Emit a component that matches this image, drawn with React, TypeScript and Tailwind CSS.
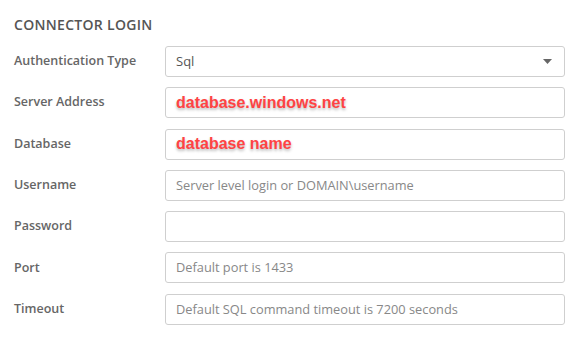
type Row = {
  label: string;
  kind: "select" | "red" | "placeholder" | "empty";
  text?: string;
};

const rows: Row[] = [
  { label: "Authentication Type", kind: "select", text: "Sql" },
  { label: "Server Address", kind: "red", text: "database.windows.net" },
  { label: "Database", kind: "red", text: "database name" },
  { label: "Username", kind: "placeholder", text: "Server level login or DOMAIN\\username" },
  { label: "Password", kind: "empty" },
  { label: "Port", kind: "placeholder", text: "Default port is 1433" },
  { label: "Timeout", kind: "placeholder", text: "Default SQL command timeout is 7200 seconds" },
];

function Field({ row }: { row: Row }) {
  return (
    <div className="flex items-center">
      <label className="w-[151px] text-[12.5px] font-semibold text-[#666] font-['Open_Sans',sans-serif]">
        {row.label}
      </label>
      <div className="flex h-[31px] w-[400px] items-center rounded-[3px] border border-[#cfcfcf] bg-white pl-[10px] pr-[12px]">
        {row.kind === "select" && (
          <>
            <span className="flex-1 text-[13px] text-[#555] font-['Open_Sans',sans-serif]">
              {row.text}
            </span>
            <svg width="9" height="5" viewBox="0 0 9 5">
              <path d="M0 0h9L4.5 5z" fill="#666" />
            </svg>
          </>
        )}
        {row.kind === "red" && (
          <span className="text-[16px] font-bold text-[#ff4343] font-['Liberation_Sans',Arial,sans-serif] [text-shadow:0_2px_3px_rgba(0,0,0,0.28)]">
            {row.text}
          </span>
        )}
        {row.kind === "placeholder" && (
          <span className="text-[12.8px] text-[#888] font-['Open_Sans',sans-serif]">
            {row.text}
          </span>
        )}
      </div>
    </div>
  );
}

export default function App() {
  return (
    <div className="h-[341px] w-[578px] bg-white pl-[14px] pt-[14px]">
      <h5 className="text-[14px] font-semibold tracking-[0.3px] text-[#555] font-['Open_Sans',sans-serif]">
        CONNECTOR LOGIN
      </h5>
      <div className="mt-[11px] flex flex-col gap-[10.3px]">
        {rows.map((r) => (
          <Field key={r.label} row={r} />
        ))}
      </div>
    </div>
  );
}
